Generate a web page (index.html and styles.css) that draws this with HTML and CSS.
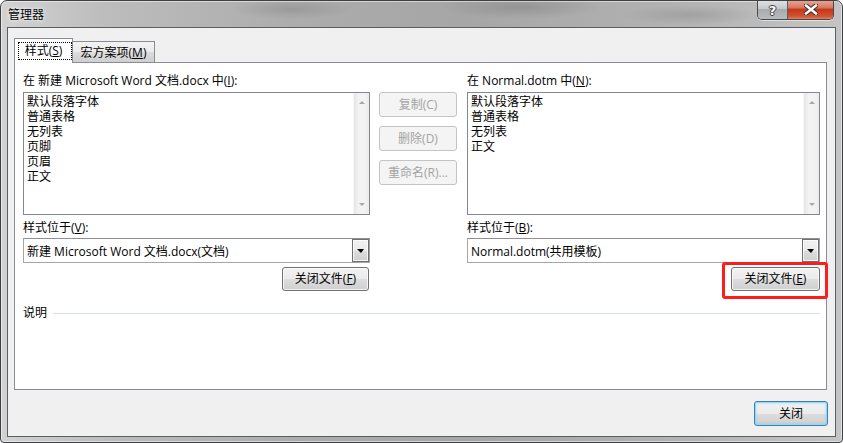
FILE: index.html
```html
<!DOCTYPE html>
<html lang="zh-CN">
<head>
<meta charset="utf-8">
<title>管理器</title>
<link rel="stylesheet" href="styles.css">
</head>
<body>
<div class="window">
  <div class="titlebar">
    <span class="title">管理器</span>
    <div class="caption-btns">
      <div class="cap help">?</div>
      <div class="cap close">
        <svg width="14" height="11" viewBox="0 0 14 11">
          <path d="M2 1.5 L12 9.5 M12 1.5 L2 9.5" stroke="#3a3a3a" stroke-width="4.6" stroke-linecap="square"/>
          <path d="M2 1.5 L12 9.5 M12 1.5 L2 9.5" stroke="#ffffff" stroke-width="2.4" stroke-linecap="square"/>
        </svg>
      </div>
    </div>
  </div>
  <div class="client">
    <div class="tabs">
      <div class="tab tab-active"><span class="focus">样式(<u>S</u>)</span></div>
      <div class="tab tab-idle">宏方案项(<u>M</u>)</div>
    </div>
    <div class="panel">
      <div class="grid">
        <div class="label">在 新建 Microsoft Word 文档.docx 中(<u>I</u>):</div>
        <div></div>
        <div class="label">在 Normal.dotm 中(<u>N</u>):</div>

        <div class="listbox">
          <div class="items">
            <div class="item">默认段落字体</div>
            <div class="item">普通表格</div>
            <div class="item">无列表</div>
            <div class="item">页脚</div>
            <div class="item">页眉</div>
            <div class="item">正文</div>
          </div>
          <div class="vscroll"><span class="arr-up"></span><span class="arr-down"></span></div>
        </div>
        <div class="mid-btns">
          <div class="btn btn-disabled">复制(C)</div>
          <div class="btn btn-disabled">删除(D)</div>
          <div class="btn btn-disabled">重命名(R)...</div>
        </div>
        <div class="listbox">
          <div class="items">
            <div class="item">默认段落字体</div>
            <div class="item">普通表格</div>
            <div class="item">无列表</div>
            <div class="item">正文</div>
          </div>
          <div class="vscroll"><span class="arr-up"></span><span class="arr-down"></span></div>
        </div>

        <div class="label label-2">样式位于(<u>V</u>):</div>
        <div></div>
        <div class="label label-2">样式位于(<u>B</u>):</div>

        <div class="combo">
          <span class="combo-text">新建 Microsoft Word 文档.docx(文档)</span>
          <span class="combo-btn"><span class="arr-down-black"></span></span>
        </div>
        <div></div>
        <div class="combo">
          <span class="combo-text">Normal.dotm(共用模板)</span>
          <span class="combo-btn"><span class="arr-down-black"></span></span>
        </div>

        <div class="btn-row"><div class="btn btn-close-left">关闭文件(<u>F</u>)</div></div>
        <div></div>
        <div class="btn-row"><div class="hl"><div class="btn btn-close-right">关闭文件(<u>E</u>)</div></div></div>
      </div>
      <div class="desc"><span>说明</span><span class="rule"></span></div>
    </div>
    <div class="footer"><div class="btn btn-default">关闭</div></div>
  </div>
</div>
</body>
</html>
```

FILE: styles.css
```css
* { box-sizing: border-box; }
html, body {
  margin: 0;
  width: 843px;
  height: 443px;
  overflow: hidden;
  background: #ffffff;
}
body {
  font-family: "Open Sans", "Noto Sans CJK SC", sans-serif;
  font-size: 12px;
  color: #000;
}
u { text-decoration: underline; text-underline-offset: 1px; }

.window {
  width: 843px;
  height: 443px;
  border: 1px solid #3c3f44;
  border-radius: 7px 7px 4px 4px;
  display: flex;
  flex-direction: column;
  background:
    radial-gradient(ellipse 60px 10px at 290px 8px, rgba(120,120,120,.35), transparent),
    radial-gradient(ellipse 80px 12px at 520px 6px, rgba(110,110,110,.35), transparent),
    radial-gradient(ellipse 70px 10px at 690px 14px, rgba(120,120,120,.30), transparent),
    linear-gradient(to right, #d2d2d2 0, #bdbdbd 12%, #acacac 35%, #a6a6a6 55%, #b2b2b2 80%, #c4c4c4 100%);
  box-shadow: inset 0 0 0 1px rgba(255,255,255,.5);
  overflow: hidden;
}

.titlebar {
  height: 26px;
  flex: none;
  display: flex;
  justify-content: space-between;
  align-items: flex-start;
  padding: 0 8px 0 7px;
}
.title {
  margin-top: 6px;
  line-height: 16px;
  font-size: 12px;
  text-shadow: 0 0 5px rgba(255,255,255,.9), 0 0 2px rgba(255,255,255,.8);
}
.caption-btns {
  display: flex;
  margin-top: -1px;
  height: 20px;
  border: 1px solid #474a50;
  border-top: none;
  border-radius: 0 0 5px 5px;
  overflow: hidden;
  box-shadow: 0 1px 0 rgba(255,255,255,.5);
}
.cap {
  height: 19px;
  display: flex;
  align-items: center;
  justify-content: center;
}
.help {
  width: 30px;
  border-right: 1px solid #5a5d62;
  background: linear-gradient(#e2e3e4 0, #c6c8ca 45%, #a9acaf 50%, #b9bcbe 100%);
  color: #fff;
  font: bold 13px "DejaVu Sans", sans-serif;
  text-shadow: 1px 0 0 #3d3d3d, -1px 0 0 #3d3d3d, 0 1px 0 #3d3d3d, 0 -1px 0 #3d3d3d;
  padding-top: 1px;
}
.close {
  width: 45px;
  background: linear-gradient(#e9a99b 0, #d9775f 40%, #c4391c 50%, #d2512f 85%, #e0835f 100%);
}

.client {
  flex: 1;
  margin: 0 6px 5px 6px;
  border: 1px solid #5b5e63;
  background: #f0f0f0;
  padding: 10px 8px 10px 6px;
  display: flex;
  flex-direction: column;
}

.tabs {
  height: 24px;
  display: flex;
  align-items: flex-end;
  flex: none;
}
.tab {
  border: 1px solid #898c95;
  border-bottom: none;
  font-size: 12px;
  line-height: 16px;
}
.tab-active {
  width: 59px;
  height: 25px;
  margin-bottom: -1px;
  position: relative;
  z-index: 1;
  background: #ffffff;
  padding: 3px 0 0 3px;
}
.focus {
  display: flex;
  align-items: center;
  justify-content: center;
  width: 54px;
  height: 18px;
  border: 1px dotted #000;
  padding-right: 3px;
}
.tab-idle {
  width: 82px;
  height: 21px;
  border-left: none;
  background: linear-gradient(#f2f2f2 0, #ebebeb 50%, #dddddd 51%, #cfcfcf 100%);
  text-align: center;
  padding-top: 3px;
}

.panel {
  flex: 1;
  border: 1px solid #898c95;
  background: #ffffff;
  padding: 10px 6px 0 8px;
}
.grid {
  display: grid;
  grid-template-columns: 347px 97px 353px;
}
.label {
  line-height: 16px;
  margin-bottom: 3px;
  white-space: nowrap;
}
.label-2 {
  margin-top: 5px;
  margin-bottom: 2px;
}

.listbox {
  height: 123px;
  border: 1px solid #828790;
  display: flex;
  background: #fff;
}
.items {
  flex: 1;
  padding: 1px 0 0 3px;
}
.item {
  line-height: 15px;
  height: 15px;
  white-space: nowrap;
}
.vscroll {
  width: 16px;
  flex: none;
  background: linear-gradient(to right, #e6e6e6 0, #f3f3f3 30%, #f3f3f3 70%, #ebebeb 100%);
  border-left: 1px solid #f7f7f7;
  display: flex;
  flex-direction: column;
  justify-content: space-between;
  align-items: center;
  padding: 8px 0 8px 0;
}
.arr-up, .arr-down {
  width: 0;
  height: 0;
  border-left: 3px solid transparent;
  border-right: 3px solid transparent;
}
.arr-up { border-bottom: 3px solid #a8a8a8; }
.arr-down { border-top: 3px solid #a8a8a8; }

.mid-btns {
  padding-left: 9px;
  display: flex;
  flex-direction: column;
  gap: 9px;
}
.btn {
  height: 24px;
  border: 1px solid #707070;
  border-radius: 3px;
  display: flex;
  align-items: center;
  justify-content: center;
  white-space: nowrap;
  background: linear-gradient(#f2f2f2 0, #ebebeb 50%, #dddddd 51%, #cfcfcf 100%);
  box-shadow: inset 0 0 0 1px rgba(255,255,255,.75);
  line-height: 16px;
}
.btn-disabled {
  width: 78px;
  height: 25px;
  border-color: #c4c4c4;
  background: #f4f4f4;
  box-shadow: none;
  color: #a3a3a3;
}

.combo {
  height: 25px;
  border: 1px solid #a4a6aa;
  border-top-color: #8e9095;
  display: flex;
  align-items: stretch;
  background: #fff;
}
.combo-text {
  flex: 1;
  padding-left: 3px;
  display: flex;
  align-items: center;
  white-space: nowrap;
}
.combo-btn {
  width: 17px;
  flex: none;
  border: 1px solid #707070;
  margin: 0 0 0 0;
  background: linear-gradient(#f2f2f2 0, #ebebeb 50%, #dddddd 51%, #cfcfcf 100%);
  box-shadow: inset 0 0 0 1px rgba(255,255,255,.75);
  display: flex;
  align-items: center;
  justify-content: center;
}
.arr-down-black {
  width: 0;
  height: 0;
  border-left: 4px solid transparent;
  border-right: 3px solid transparent;
  border-top: 4px solid #000;
}

.btn-row {
  display: flex;
  justify-content: flex-end;
  margin-top: 4px;
}
.btn-close-left { width: 87px; margin-right: 1px; }
.btn-close-right { width: 89px; }
.hl { position: relative; }
.hl::after {
  content: "";
  position: absolute;
  left: -9px;
  right: -8px;
  top: -5px;
  bottom: -8px;
  border: 3px solid #ff1c1c;
  border-radius: 3px;
  pointer-events: none;
}

.desc {
  display: flex;
  align-items: center;
  gap: 6px;
  margin-top: 14px;
  line-height: 16px;
}
.rule {
  flex: 1;
  height: 1px;
  background: #d5dfe5;
  margin-top: 1px;
}

.footer {
  flex: none;
  display: flex;
  justify-content: flex-end;
  margin-top: 11px;
  margin-right: -1px;
}
.btn-default {
  width: 74px;
  height: 25px;
  border-color: #3c7fb1;
  box-shadow: inset 0 0 0 1px #8fdcfa, inset 0 0 3px 1px rgba(80,190,240,.35);
}
```
